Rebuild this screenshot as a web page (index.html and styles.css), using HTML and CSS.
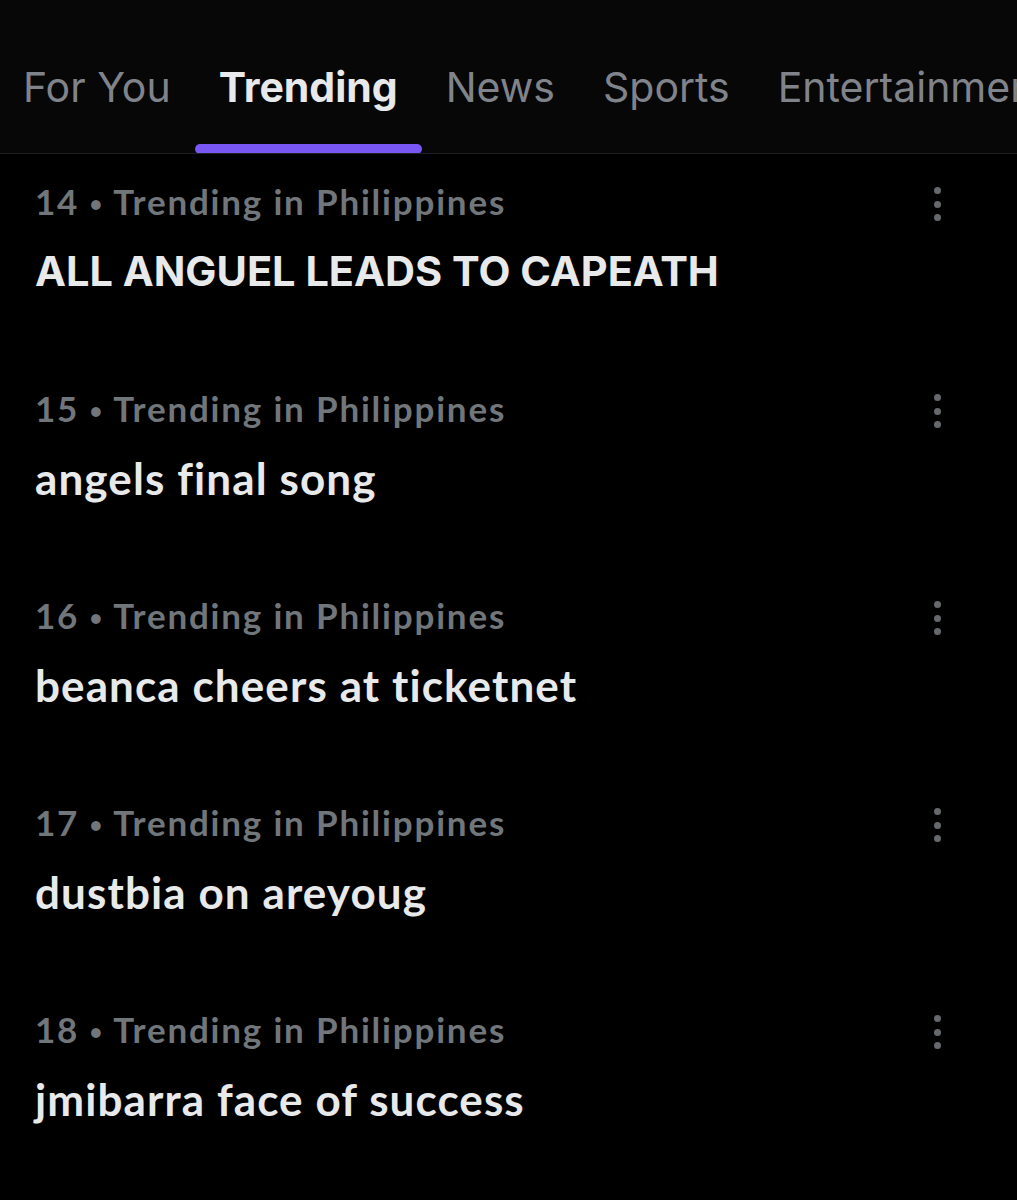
FILE: index.html
```html
<!DOCTYPE html>
<html lang="en">
<head>
  <meta charset="UTF-8" />
  <meta name="viewport" content="width=device-width, initial-scale=1.0"/>
  <title>Explore - Trending</title>
  <link rel="stylesheet" href="styles.css">
</head>
<body>
  <nav class="tabs">
    <a class="tab">For You</a>
    <a class="tab active">Trending</a>
    <a class="tab">News</a>
    <a class="tab">Sports</a>
    <a class="tab">Entertainment</a>
  </nav>

  <div class="trends">
    <div class="trend">
      <div class="trend-text">
        <div class="meta">14 <span class="dot">•</span> Trending in Philippines</div>
        <div class="title caps">ALL ANGUEL LEADS TO CAPEATH</div>
      </div>
      <button class="more"><span></span><span></span><span></span></button>
    </div>
    <div class="trend">
      <div class="trend-text">
        <div class="meta">15 <span class="dot">•</span> Trending in Philippines</div>
        <div class="title">angels final song</div>
      </div>
      <button class="more"><span></span><span></span><span></span></button>
    </div>
    <div class="trend">
      <div class="trend-text">
        <div class="meta">16 <span class="dot">•</span> Trending in Philippines</div>
        <div class="title">beanca cheers at ticketnet</div>
      </div>
      <button class="more"><span></span><span></span><span></span></button>
    </div>
    <div class="trend">
      <div class="trend-text">
        <div class="meta">17 <span class="dot">•</span> Trending in Philippines</div>
        <div class="title">dustbia on areyoug</div>
      </div>
      <button class="more"><span></span><span></span><span></span></button>
    </div>
    <div class="trend">
      <div class="trend-text">
        <div class="meta">18 <span class="dot">•</span> Trending in Philippines</div>
        <div class="title">jmibarra face of success</div>
      </div>
      <button class="more"><span></span><span></span><span></span></button>
    </div>
  </div>
</body>
</html>
```

FILE: styles.css
```css
body {
  font-family: 'Lato', 'Noto Sans', sans-serif;
  font-variant-ligatures: none;
  background-color: #000;
  margin: 0;
  padding: 0;
  overflow: hidden;
}
.tabs {
  display: flex;
  height: 153px;
  align-items: flex-end;
  background-color: #070707;
  border-bottom: 1px solid #1f2124;
  white-space: nowrap;
  overflow: hidden;
}
.tab {
  position: relative;
  padding: 0 24px 46px;
  font-family: 'Inter', 'Liberation Sans', sans-serif;
  font-size: 41px;
  line-height: 40px;
  color: #80848a;
  font-weight: 400;
  flex-shrink: 0;
}
.tab:first-child {
  margin-left: -1px;
}
.tab.active {
  color: #e7e9ea;
  font-weight: 700;
}
.tab.active::after {
  content: "";
  position: absolute;
  left: 0;
  right: 0;
  bottom: -1px;
  height: 10px;
  border-radius: 6px;
  background-color: #7857f5;
}
.trends {
  padding: 0 0 0 35px;
}
.trend {
  display: flex;
  align-items: flex-start;
  height: 207px;
}
.trend-text {
  flex: 1;
  padding-top: 27px;
}
.meta {
  font-size: 35px;
  font-weight: 700;
  letter-spacing: 1.8px;
  color: #71767b;
  line-height: 40px;
}
.meta .dot {
  font-size: 22px;
  vertical-align: 3px;
}
.title {
  margin-top: 25px;
  font-size: 44px;
  font-weight: 700;
  letter-spacing: 1.1px;
  color: #e7e9ea;
  line-height: 44px;
}
.title.caps {
  font-family: 'Inter', 'Liberation Sans', sans-serif;
  font-size: 41.5px;
  letter-spacing: 0;
  line-height: 44px;
}
.more {
  display: flex;
  flex-direction: column;
  align-items: center;
  gap: 6.5px;
  margin: 33px 76px 0 0;
  padding: 0;
  background: none;
  border: none;
  width: 7px;
}
.more span {
  display: block;
  width: 7px;
  height: 7px;
  border-radius: 50%;
  background-color: #65686c;
}
```
